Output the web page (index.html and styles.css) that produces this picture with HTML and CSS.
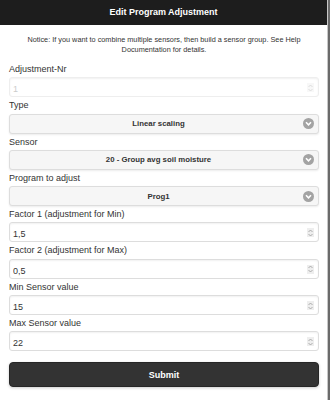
FILE: index.html
```html
<!DOCTYPE html>
<html lang="en">

<head>
    <meta charset="UTF-8">
    <meta name="viewport" content="width=device-width, initial-scale=1.0">
    <title>Edit Program Adjustment</title>
    <link rel="stylesheet" href="styles.css">
</head>

<body>

    <div class="popup">
        <!-- Popup header -->
        <div class="popup-header">Edit Program Adjustment</div>

        <div class="popup-content">
            <p class="notice">Notice: If you want to combine multiple sensors, then build a sensor group. See Help Documentation for details.</p>

            <!-- Adjustment number -->
            <label class="field-label">Adjustment-Nr</label>
            <div class="field field-disabled">
                <input type="text" class="field-input" value="1" disabled>
                <span class="spinner">
                    <svg width="5" height="8" viewBox="0 0 5 8"><path d="M0.5 3L2.5 1L4.5 3M0.5 5L2.5 7L4.5 5" fill="none" stroke="#999" stroke-width="0.8"/></svg>
                </span>
            </div>

            <!-- Type -->
            <label class="field-label">Type</label>
            <div class="select-btn">
                <span class="select-text">Linear scaling</span>
                <span class="select-icon">
                    <svg width="11" height="11" viewBox="0 0 11 11"><circle cx="5.5" cy="5.5" r="5.5" fill="#a3a3a3"/><path d="M3 4.3L5.5 6.8L8 4.3" fill="none" stroke="#fff" stroke-width="1.6"/></svg>
                </span>
            </div>

            <!-- Sensor -->
            <label class="field-label">Sensor</label>
            <div class="select-btn">
                <span class="select-text">20 - Group avg soil moisture</span>
                <span class="select-icon">
                    <svg width="11" height="11" viewBox="0 0 11 11"><circle cx="5.5" cy="5.5" r="5.5" fill="#a3a3a3"/><path d="M3 4.3L5.5 6.8L8 4.3" fill="none" stroke="#fff" stroke-width="1.6"/></svg>
                </span>
            </div>

            <!-- Program -->
            <label class="field-label">Program to adjust</label>
            <div class="select-btn">
                <span class="select-text">Prog1</span>
                <span class="select-icon">
                    <svg width="11" height="11" viewBox="0 0 11 11"><circle cx="5.5" cy="5.5" r="5.5" fill="#a3a3a3"/><path d="M3 4.3L5.5 6.8L8 4.3" fill="none" stroke="#fff" stroke-width="1.6"/></svg>
                </span>
            </div>

            <!-- Factors and sensor range -->
            <label class="field-label">Factor 1 (adjustment for Min)</label>
            <div class="field">
                <input type="text" class="field-input" value="1,5">
                <span class="spinner">
                    <svg width="5" height="8" viewBox="0 0 5 8"><path d="M0.5 3L2.5 1L4.5 3M0.5 5L2.5 7L4.5 5" fill="none" stroke="#999" stroke-width="0.8"/></svg>
                </span>
            </div>

            <label class="field-label">Factor 2 (adjustment for Max)</label>
            <div class="field">
                <input type="text" class="field-input" value="0,5">
                <span class="spinner">
                    <svg width="5" height="8" viewBox="0 0 5 8"><path d="M0.5 3L2.5 1L4.5 3M0.5 5L2.5 7L4.5 5" fill="none" stroke="#999" stroke-width="0.8"/></svg>
                </span>
            </div>

            <label class="field-label">Min Sensor value</label>
            <div class="field">
                <input type="text" class="field-input" value="15">
                <span class="spinner">
                    <svg width="5" height="8" viewBox="0 0 5 8"><path d="M0.5 3L2.5 1L4.5 3M0.5 5L2.5 7L4.5 5" fill="none" stroke="#999" stroke-width="0.8"/></svg>
                </span>
            </div>

            <label class="field-label">Max Sensor value</label>
            <div class="field">
                <input type="text" class="field-input" value="22">
                <span class="spinner">
                    <svg width="5" height="8" viewBox="0 0 5 8"><path d="M0.5 3L2.5 1L4.5 3M0.5 5L2.5 7L4.5 5" fill="none" stroke="#999" stroke-width="0.8"/></svg>
                </span>
            </div>

            <!-- Submit -->
            <button class="submit-btn">Submit</button>
        </div>
    </div>

</body>

</html>
```

FILE: styles.css
```css
body {
    margin: 0;
    background-color: #6a6a6a;
    font-family: "Liberation Sans", Arial, sans-serif;
    color: #333;
}

.popup {
    width: 327px;
    min-height: 400px;
    background-color: #fff;
    border-right: 1px solid #c8c8c8;
}

/* Header bar */
.popup-header {
    height: 25px;
    line-height: 25px;
    background-color: #1d1d1d;
    color: #fff;
    font-size: 9px;
    font-weight: bold;
    text-align: center;
}

.popup-content {
    display: flex;
    flex-direction: column;
    padding: 0 8px 0 9px;
}

.notice {
    margin: 10px 0 8px;
    font-size: 7.3px;
    line-height: 10px;
    text-align: center;
    color: #333;
}

.field-label {
    display: block;
    font-size: 9px;
    line-height: 12.3px;
    margin-bottom: 2px;
    color: #333;
}

/* Text inputs */
.field {
    position: relative;
    height: 20px;
    margin-bottom: 2px;
    box-sizing: border-box;
    border: 1px solid #ddd;
    border-radius: 3px;
    background-color: #fff;
    box-shadow: inset 0 1px 2px rgba(0, 0, 0, 0.06);
}

.field-input {
    width: 100%;
    height: 100%;
    box-sizing: border-box;
    border: none;
    outline: none;
    background: transparent;
    padding: 0 20px 0 3px;
    font-family: inherit;
    font-size: 9px;
    color: #333;
}

.field-disabled {
    border-color: #eee;
}

.field-disabled .field-input {
    color: #ccc;
}

.field-disabled .spinner {
    opacity: 0.4;
}

.spinner {
    position: absolute;
    right: 4px;
    top: 5px;
    width: 7px;
    height: 9px;
    display: flex;
    align-items: center;
    justify-content: center;
    background-color: #eee;
}

/* Select buttons */
.select-btn {
    display: flex;
    align-items: center;
    height: 20px;
    margin-bottom: 2px;
    box-sizing: border-box;
    border: 1px solid #ddd;
    border-radius: 3px;
    background-color: #f6f6f6;
    box-shadow: 0 1px 2px rgba(0, 0, 0, 0.08);
    padding: 0 4px 0 10px;
}

.select-text {
    flex: 1;
    text-align: center;
    font-size: 7.8px;
    font-weight: bold;
    color: #333;
    padding-right: 6px;
}

.select-icon {
    display: flex;
}

/* Submit */
.submit-btn {
    margin-top: 9px;
    height: 25px;
    border: 1px solid #262626;
    border-radius: 4px;
    background-color: #333;
    color: #fff;
    font-family: inherit;
    font-size: 9px;
    font-weight: bold;
    box-shadow: 0 1px 3px rgba(0, 0, 0, 0.2);
}
```
